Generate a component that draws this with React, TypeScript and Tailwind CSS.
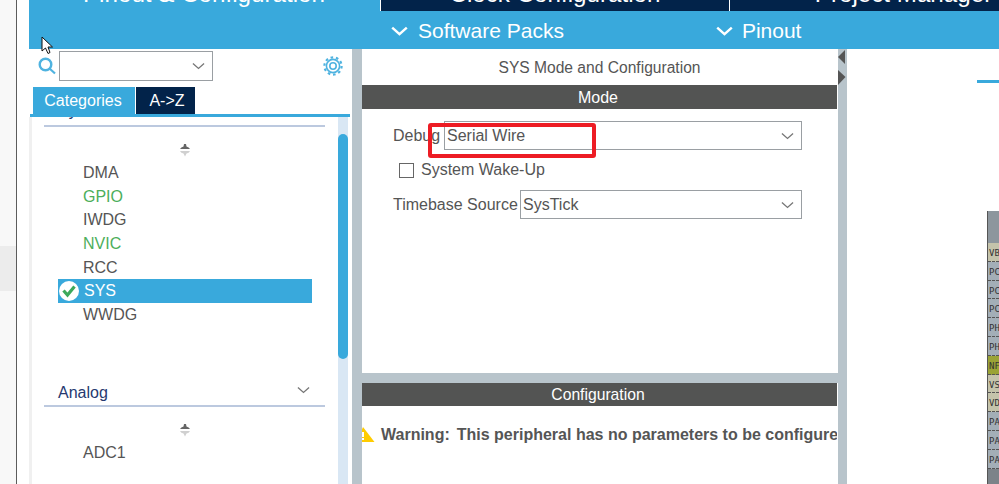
import React from "react";

const Chevron = ({ className = "", w = 1.4 }: { className?: string; w?: number }) => (
  <svg viewBox="0 0 14 8" className={className} fill="none" stroke="currentColor">
    <path d="M1 1.2 L7 6.6 L13 1.2" strokeWidth={w} />
  </svg>
);

const Sorter = () => (
  <div className="flex justify-center">
    <svg width="12" height="14" viewBox="0 0 12 14" className="mr-[1px]">
      <path d="M1 6 Q2 4 4.5 3.5 L5 1 L7 1 L7.5 3.5 Q10 4 11 6 Z" fill="#666" />
      <path d="M1 8 Q2 10 4.5 10.5 L6 13.5 L7.5 10.5 Q10 10 11 8 Z" fill="#d0d0d0" />
    </svg>
  </div>
);

const Select = ({ value, className }: { value: string; className: string }) => (
  <div className={`flex items-center justify-between border border-[#9a9fa3] pl-[2px] pr-[7px] text-[16px] text-[#555] ${className}`}>
    <span>{value}</span>
    <Chevron className="w-[13px] h-[8px] text-[#777]" />
  </div>
);

const Row = ({ label, green }: { label: string; green?: boolean }) => (
  <div className={`h-[23.7px] leading-[23.7px] pl-[51px] text-[16px] ${green ? "text-[#4cae5b]" : "text-[#555]"}`}>{label}</div>
);

const pins: [string, string][] = [
  ["VB", "bg-[#c4c3ab]"], ["PC", "bg-[#a3aeb7]"], ["PC", "bg-[#a3aeb7]"], ["PC", "bg-[#a3aeb7]"],
  ["PH", "bg-[#a3aeb7]"], ["PH", "bg-[#a3aeb7]"], ["NF", "bg-[#9aa336]"], ["VS", "bg-[#c4c3ab]"],
  ["VD", "bg-[#c4c3ab]"], ["PA", "bg-[#a3aeb7]"], ["PA", "bg-[#a3aeb7]"], ["PA", "bg-[#a3aeb7]"],
];

export default function App() {
  return (
    <div className="relative flex w-[999px] h-[484px] overflow-hidden bg-white font-['Liberation_Sans',Arial,sans-serif]">
      {/* desktop strip */}
      <div className="flex flex-col w-[17px] border-r border-r-[#5c5c5c] bg-[#f8f8f8]">
        <div className="h-[246px]" />
        <div className="h-[45px] bg-[#ececec]" />
      </div>
      <div className="w-[12px] bg-white" />

      {/* application */}
      <div className="flex flex-col flex-1 min-w-0">
        {/* tabs */}
        <div className="flex h-[11px] overflow-hidden text-[24.2px] text-white leading-[28px] whitespace-nowrap">
          <div className="w-[352px] bg-[#39a9dc] flex justify-center items-end border-r border-r-white"><span className="mb-[3px] pr-[1px]">Pinout &amp; Configuration</span></div>
          <div className="w-[349px] bg-[#02234a] flex justify-center items-end border-r border-r-white"><span className="mb-[3px]">Clock Configuration</span></div>
          <div className="flex-1 bg-[#02234a] flex justify-center items-end"><span className="mb-[3px] pl-[78px]">Project Manager</span></div>
        </div>
        {/* sub bar */}
        <div className="flex h-[38px] bg-[#39a9dc] text-white text-[21px] items-center pt-[1px]">
          <div className="flex items-center gap-[10px] ml-[362px]">
            <Chevron className="w-[17px] h-[10px]" w={2} />
            <span>Software Packs</span>
          </div>
          <div className="flex items-center gap-[9px] ml-[152px]">
            <Chevron className="w-[17px] h-[10px]" w={2} />
            <span>Pinout</span>
          </div>
        </div>

        {/* main */}
        <div className="flex flex-1 min-h-0">
          {/* left panel */}
          <div className="flex flex-col w-[323px]">
            <div className="flex h-[38px] pt-[2px]">
              <svg className="ml-[9px] mt-[6px]" width="18" height="18" viewBox="0 0 18 18" fill="none" stroke="#4fb3e0">
                <circle cx="7.5" cy="7.5" r="5.8" strokeWidth="2.4" />
                <path d="M11.5 11.5 L17 16.5" strokeWidth="2.2" />
              </svg>
              <Select value="" className="ml-[3px] w-[154px] h-[30px]" />
              <svg className="ml-[110px] mt-[5px]" width="20" height="20" viewBox="0 0 20 20" fill="none" stroke="#4fb3e0">
                <circle cx="10" cy="10" r="3.2" strokeWidth="1.6" />
                <circle cx="10" cy="10" r="6.6" strokeWidth="1.6" />
                <circle cx="10" cy="10" r="8.6" strokeWidth="2.2" strokeDasharray="2.6 2.8" />
              </svg>
            </div>
            <div className="flex h-[27px] pl-[4px] text-[16px] text-white leading-[27px]">
              <div className="w-[102px] pr-[2px] text-center bg-[#39a9dc]">Categories</div>
              <div className="ml-[1px] w-[59px] pl-[3px] text-center bg-[#02234a]">A-&gt;Z</div>
            </div>
            <div className="h-[3px] ml-[1px] mr-[2px] bg-[#39a9dc]" />
            <div className="flex flex-1 min-h-0">
              <div className="w-[3px] bg-[#f0f0f0]" />
              <div className="w-[306px] overflow-hidden">
                <div className="ml-[12px] mr-[13px] h-[10px] overflow-hidden border-b-2 border-b-[#bcc9df] pl-[14px] text-[16px] leading-[16px] text-[#26396f]">
                  <div className="mt-[-14px]">System Core</div>
                </div>
                <div className="mt-[16px]"><Sorter /></div>
                <div className="mt-[4px]">
                  <Row label="DMA" />
                  <Row label="GPIO" green />
                  <Row label="IWDG" />
                  <Row label="NVIC" green />
                  <Row label="RCC" />
                  <div className="flex items-center h-[24px] ml-[26px] mr-[26px] bg-[#39a9dc] text-white text-[16px]">
                    <svg width="22" height="22" viewBox="0 0 22 22">
                      <circle cx="11" cy="11" r="10" fill="#fff" />
                      <path d="M5.5 10.5 L9.5 15 L16.5 6.5" fill="none" stroke="#3da95c" strokeWidth="3.2" />
                    </svg>
                    <span className="ml-[4px]">SYS</span>
                  </div>
                  <Row label="WWDG" />
                </div>
                <div className="mt-[53px] ml-[12px] mr-[13px] h-[27px] flex justify-between items-center border-b-2 border-b-[#bcc9df] text-[16px] text-[#26396f] pl-[14px]">
                  <span className="mt-[1px]">Analog</span>
                  <Chevron className="w-[13px] h-[8px] text-[#777] mr-[15px] mb-[6px]" />
                </div>
                <div className="mt-[16px]"><Sorter /></div>
                <div className="mt-[4px]"><Row label="ADC1" /></div>
              </div>
              <div className="w-[10px] bg-[#d9e7f4]">
                <div className="mt-[17px] h-[225px] rounded-full bg-[#39a9dc]" />
              </div>
            </div>
          </div>

          {/* divider */}
          <div className="w-[10px] bg-[#b8c4cb]" />

          {/* middle */}
          <div className="flex flex-col w-[476px] overflow-hidden text-[#555] text-[16px]">
            <div className="h-[36px] leading-[37px] text-center pr-[1px] text-[15.6px]">SYS Mode and Configuration</div>
            <div className="h-[24px] leading-[25px] mr-[1px] bg-[#535453] text-white text-center pr-[3px]">Mode</div>
            <div className="h-[264px] flex flex-col">
              <div className="flex items-center mt-[12px] pl-[31px] leading-[26px]">
                <span className="w-[51px]">Debug</span>
                <Select value="Serial Wire" className="w-[358px] h-[29px]" />
              </div>
              <div className="flex items-center mt-[8px] pl-[37px]">
                <div className="w-[15px] h-[15px] border border-[#666]" />
                <span className="ml-[7px]">System Wake-Up</span>
              </div>
              <div className="flex items-center mt-[8px] pl-[31px]">
                <span className="w-[127px]">Timebase Source</span>
                <Select value="SysTick" className="w-[282px] h-[29px]" />
              </div>
            </div>
            <div className="h-[10px] bg-[#b8c4cb]" />
            <div className="h-[23px] leading-[23px] mr-[1px] bg-[#535453] text-white text-center text-[15.7px] pr-[3px]">Configuration</div>
            <div className="flex items-center mt-[17px] mr-[1px] overflow-hidden whitespace-nowrap font-bold">
              <svg width="13" height="16" viewBox="0 0 13 16" className="shrink-0">
                <path d="M1 0 L12.5 15 L-6 15 Z" fill="#ffcc00" />
                <rect x="0" y="5" width="2" height="5" fill="#fff" />
                <rect x="0" y="11" width="2" height="2" fill="#fff" />
              </svg>
              <span className="ml-[6px]">Warning:</span>
              <span className="ml-[7px]">This peripheral has no parameters to be configured</span>
            </div>
          </div>

          {/* divider with arrows */}
          <div className="w-[9px] bg-[#b8c4cb] flex flex-col">
            <svg width="9" height="40" viewBox="0 0 9 40">
              <path d="M7 1 L0 8 L7 15 Z" fill="#555" />
              <path d="M0 21 L7.5 28 L0 36 Z" fill="#555" />
            </svg>
          </div>

          {/* right */}
          <div className="flex flex-col flex-1 min-w-0">
            <div className="h-[3px] mt-[31px] ml-[130px] bg-[#39a9dc]" />
            <div className="mt-[128px] ml-[140px] flex-1 flex flex-col border-l border-l-[#555] bg-[#7c8389] font-['DejaVu_Sans_Mono',monospace] text-[9px] text-[#333]">
              <div className="h-[32px] bg-[#8d969d]" />
              {pins.map(([t, c], i) => (
                <div key={i} className={`h-[18.8px] leading-[20px] pl-[1px] border-b border-dashed border-b-[#555] ${c}`}>{t}</div>
              ))}
            </div>
          </div>
        </div>
      </div>

      {/* annotation */}
      <div className="absolute left-[428px] top-[123px] w-[168px] h-[35px] border-[4px] border-[#ed1c24] rounded-[3px]" />
      {/* cursor */}
      <svg className="absolute left-[41px] top-[36px]" width="13" height="19" viewBox="0 0 13 19">
        <path d="M1 1 L1 15 L4.5 12 L7 17.5 L9 16.5 L7 11 L11.5 11 Z" fill="#fff" stroke="#111" strokeWidth="1" />
      </svg>
    </div>
  );
}
